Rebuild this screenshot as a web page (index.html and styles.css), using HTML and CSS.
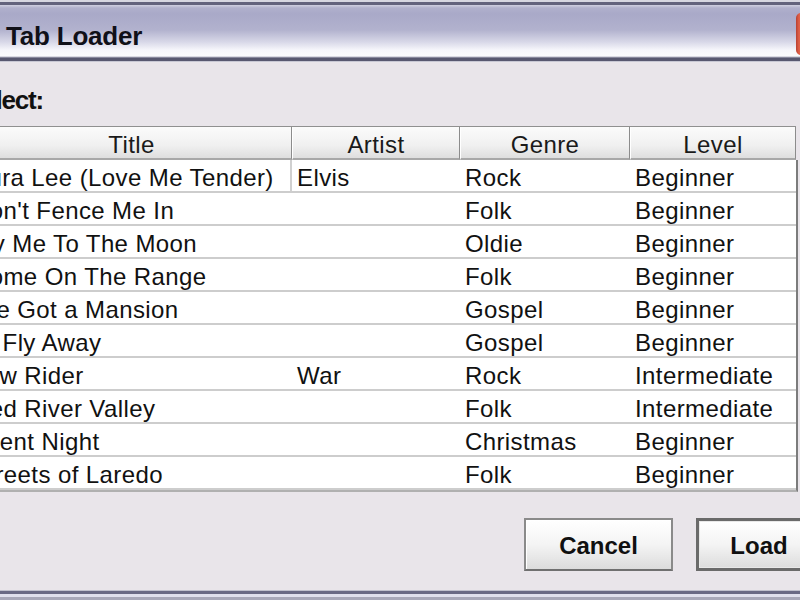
FILE: index.html
```html
<!DOCTYPE html>
<html>
<head>
<meta charset="utf-8">
<link rel="stylesheet" href="styles.css">
</head>
<body>
<div class="dialog">
  <div class="titlebar">
    <span class="title">Tab Loader</span>
    <span class="close"></span>
  </div>
  <div class="content">
    <div class="label">Select:</div>
    <div class="table">
      <div class="thead">
        <div class="th c-title">Title</div>
        <div class="th c-artist">Artist</div>
        <div class="th c-genre">Genre</div>
        <div class="th c-level">Level</div>
      </div>
      <div class="tbody">
        <div class="tr"><div class="td c-title focus">Aura Lee (Love Me Tender)</div><div class="td c-artist">Elvis</div><div class="td c-genre">Rock</div><div class="td c-level">Beginner</div></div>
        <div class="tr"><div class="td c-title">Don't Fence Me In</div><div class="td c-artist"></div><div class="td c-genre">Folk</div><div class="td c-level">Beginner</div></div>
        <div class="tr"><div class="td c-title">Fly Me To The Moon</div><div class="td c-artist"></div><div class="td c-genre">Oldie</div><div class="td c-level">Beginner</div></div>
        <div class="tr"><div class="td c-title">Home On The Range</div><div class="td c-artist"></div><div class="td c-genre">Folk</div><div class="td c-level">Beginner</div></div>
        <div class="tr"><div class="td c-title">I've Got a Mansion</div><div class="td c-artist"></div><div class="td c-genre">Gospel</div><div class="td c-level">Beginner</div></div>
        <div class="tr"><div class="td c-title">I'll Fly Away</div><div class="td c-artist"></div><div class="td c-genre">Gospel</div><div class="td c-level">Beginner</div></div>
        <div class="tr"><div class="td c-title">Low Rider</div><div class="td c-artist">War</div><div class="td c-genre">Rock</div><div class="td c-level">Intermediate</div></div>
        <div class="tr"><div class="td c-title">Red River Valley</div><div class="td c-artist"></div><div class="td c-genre">Folk</div><div class="td c-level">Intermediate</div></div>
        <div class="tr"><div class="td c-title">Silent Night</div><div class="td c-artist"></div><div class="td c-genre">Christmas</div><div class="td c-level">Beginner</div></div>
        <div class="tr"><div class="td c-title">Streets of Laredo</div><div class="td c-artist"></div><div class="td c-genre">Folk</div><div class="td c-level">Beginner</div></div>
      </div>
    </div>
    <div class="buttons">
      <button class="btn btn-cancel">Cancel</button>
      <button class="btn btn-load">Load</button>
    </div>
  </div>
  <div class="frame-bottom"></div>
</div>
</body>
</html>
```
FILE: styles.css
```css
html, body {
  margin: 0;
  padding: 0;
}
body {
  width: 800px;
  height: 600px;
  overflow: hidden;
  background: #e9e5ea;
  font-family: "Liberation Sans", Arial, sans-serif;
  color: #111;
}
.dialog {
  width: 800px;
  height: 600px;
  display: flex;
  flex-direction: column;
  overflow: hidden;
}
.titlebar {
  position: relative;
  height: 62px;
  flex: none;
  display: flex;
  align-items: center;
  padding: 10px 0 0 6px;
  box-sizing: border-box;
  background: linear-gradient(to bottom,
    #d6d6e0 0px, #d6d6e0 2px,
    #62627c 2px, #62627c 5px,
    #cfcfe0 5px, #b0b0cc 8px,
    #a9a9c8 14px, #b2b2ce 30px,
    #d8d8e8 42px, #f6f6fb 50px,
    #fbfbfd 56px, #b8b8c8 57px,
    #585870 58px, #585870 61px,
    #c8c8d4 61px, #c8c8d4 62px);
}
.title {
  font-weight: bold;
  font-size: 26px;
  letter-spacing: -0.2px;
  color: #101018;
}
.close {
  position: absolute;
  left: 796px;
  top: 13px;
  width: 20px;
  height: 42px;
  border-radius: 5px 0 0 5px;
  background: linear-gradient(to right, #b84030, #e06048 3px, #d04838);
}
.content {
  flex: 1;
  display: flex;
  flex-direction: column;
}
.label {
  margin: 22px 0 0 -34px;
  font-weight: bold;
  font-size: 26px;
  letter-spacing: -1.2px;
  line-height: 32px;
  height: 30px;
}
.table {
  margin: 12px 0 0 -29px;
  width: 828px;
  display: flex;
  flex-direction: column;
  font-size: 24px;
  letter-spacing: 0.4px;
}
.thead {
  display: flex;
  height: 34px;
  border-top: 1px solid #909090;
  box-sizing: border-box;
  width: 825px;
}
.th {
  box-sizing: border-box;
  height: 33px;
  line-height: 36px;
  text-align: center;
  background: linear-gradient(to bottom, #fbfbfb, #f0f0f0 60%, #dedede);
  border-left: 1px solid #ffffff;
  border-right: 1px solid #8c8c8c;
  border-bottom: 2px solid #a8a8a8;
  color: #1a1a1a;
}
.c-title { width: 321px; flex: none; }
.c-artist { width: 168px; flex: none; }
.c-genre { width: 170px; flex: none; }
.c-level { width: 166px; flex: none; }
.tbody {
  width: 827px;
  border-right: 2px solid #7c7c7c;
  box-sizing: border-box;
  background: #ffffff;
  border-bottom: 2px solid #b0b0b0;
}
.tr {
  display: flex;
  height: 33px;
  box-sizing: border-box;
  border-bottom: 2px solid #cdcdcd;
  background: #fff;
}
.td {
  box-sizing: border-box;
  height: 31px;
  line-height: 35px;
  padding-left: 5px;
  white-space: nowrap;
}
.td.c-title { padding-left: 1px; }
.td.focus {
  border-right: 2px solid #d0d0d0;
}
.buttons {
  display: flex;
  gap: 23px;
  margin: 26px 0 0 524px;
}
.btn {
  flex: none;
  height: 53px;
  box-sizing: border-box;
  font-family: "Liberation Sans", Arial, sans-serif;
  font-weight: bold;
  font-size: 24px;
  color: #101010;
  background: linear-gradient(to bottom, #ffffff, #f4f4f4 50%, #dcdcdc);
  border: 2px solid #8a8a8a;
  border-bottom-color: #707070;
  box-shadow: inset 1px 1px 0 #ffffff;
  padding: 3px 0 0 0;
}
.btn-cancel { width: 149px; }
.btn-load {
  width: 126px;
  border: 3px solid #6a6a6a;
  box-shadow: inset 0 0 0 1px #e8e8e8;
}
.frame-bottom {
  flex: none;
  height: 10px;
  background: linear-gradient(to bottom,
    #c0c0cc 0px, #c0c0cc 1px,
    #6a6a84 1px, #6a6a84 4px,
    #e0e0ec 4px, #e0e0ec 7px,
    #a8a8b8 7px, #a8a8b8 10px);
}
```
